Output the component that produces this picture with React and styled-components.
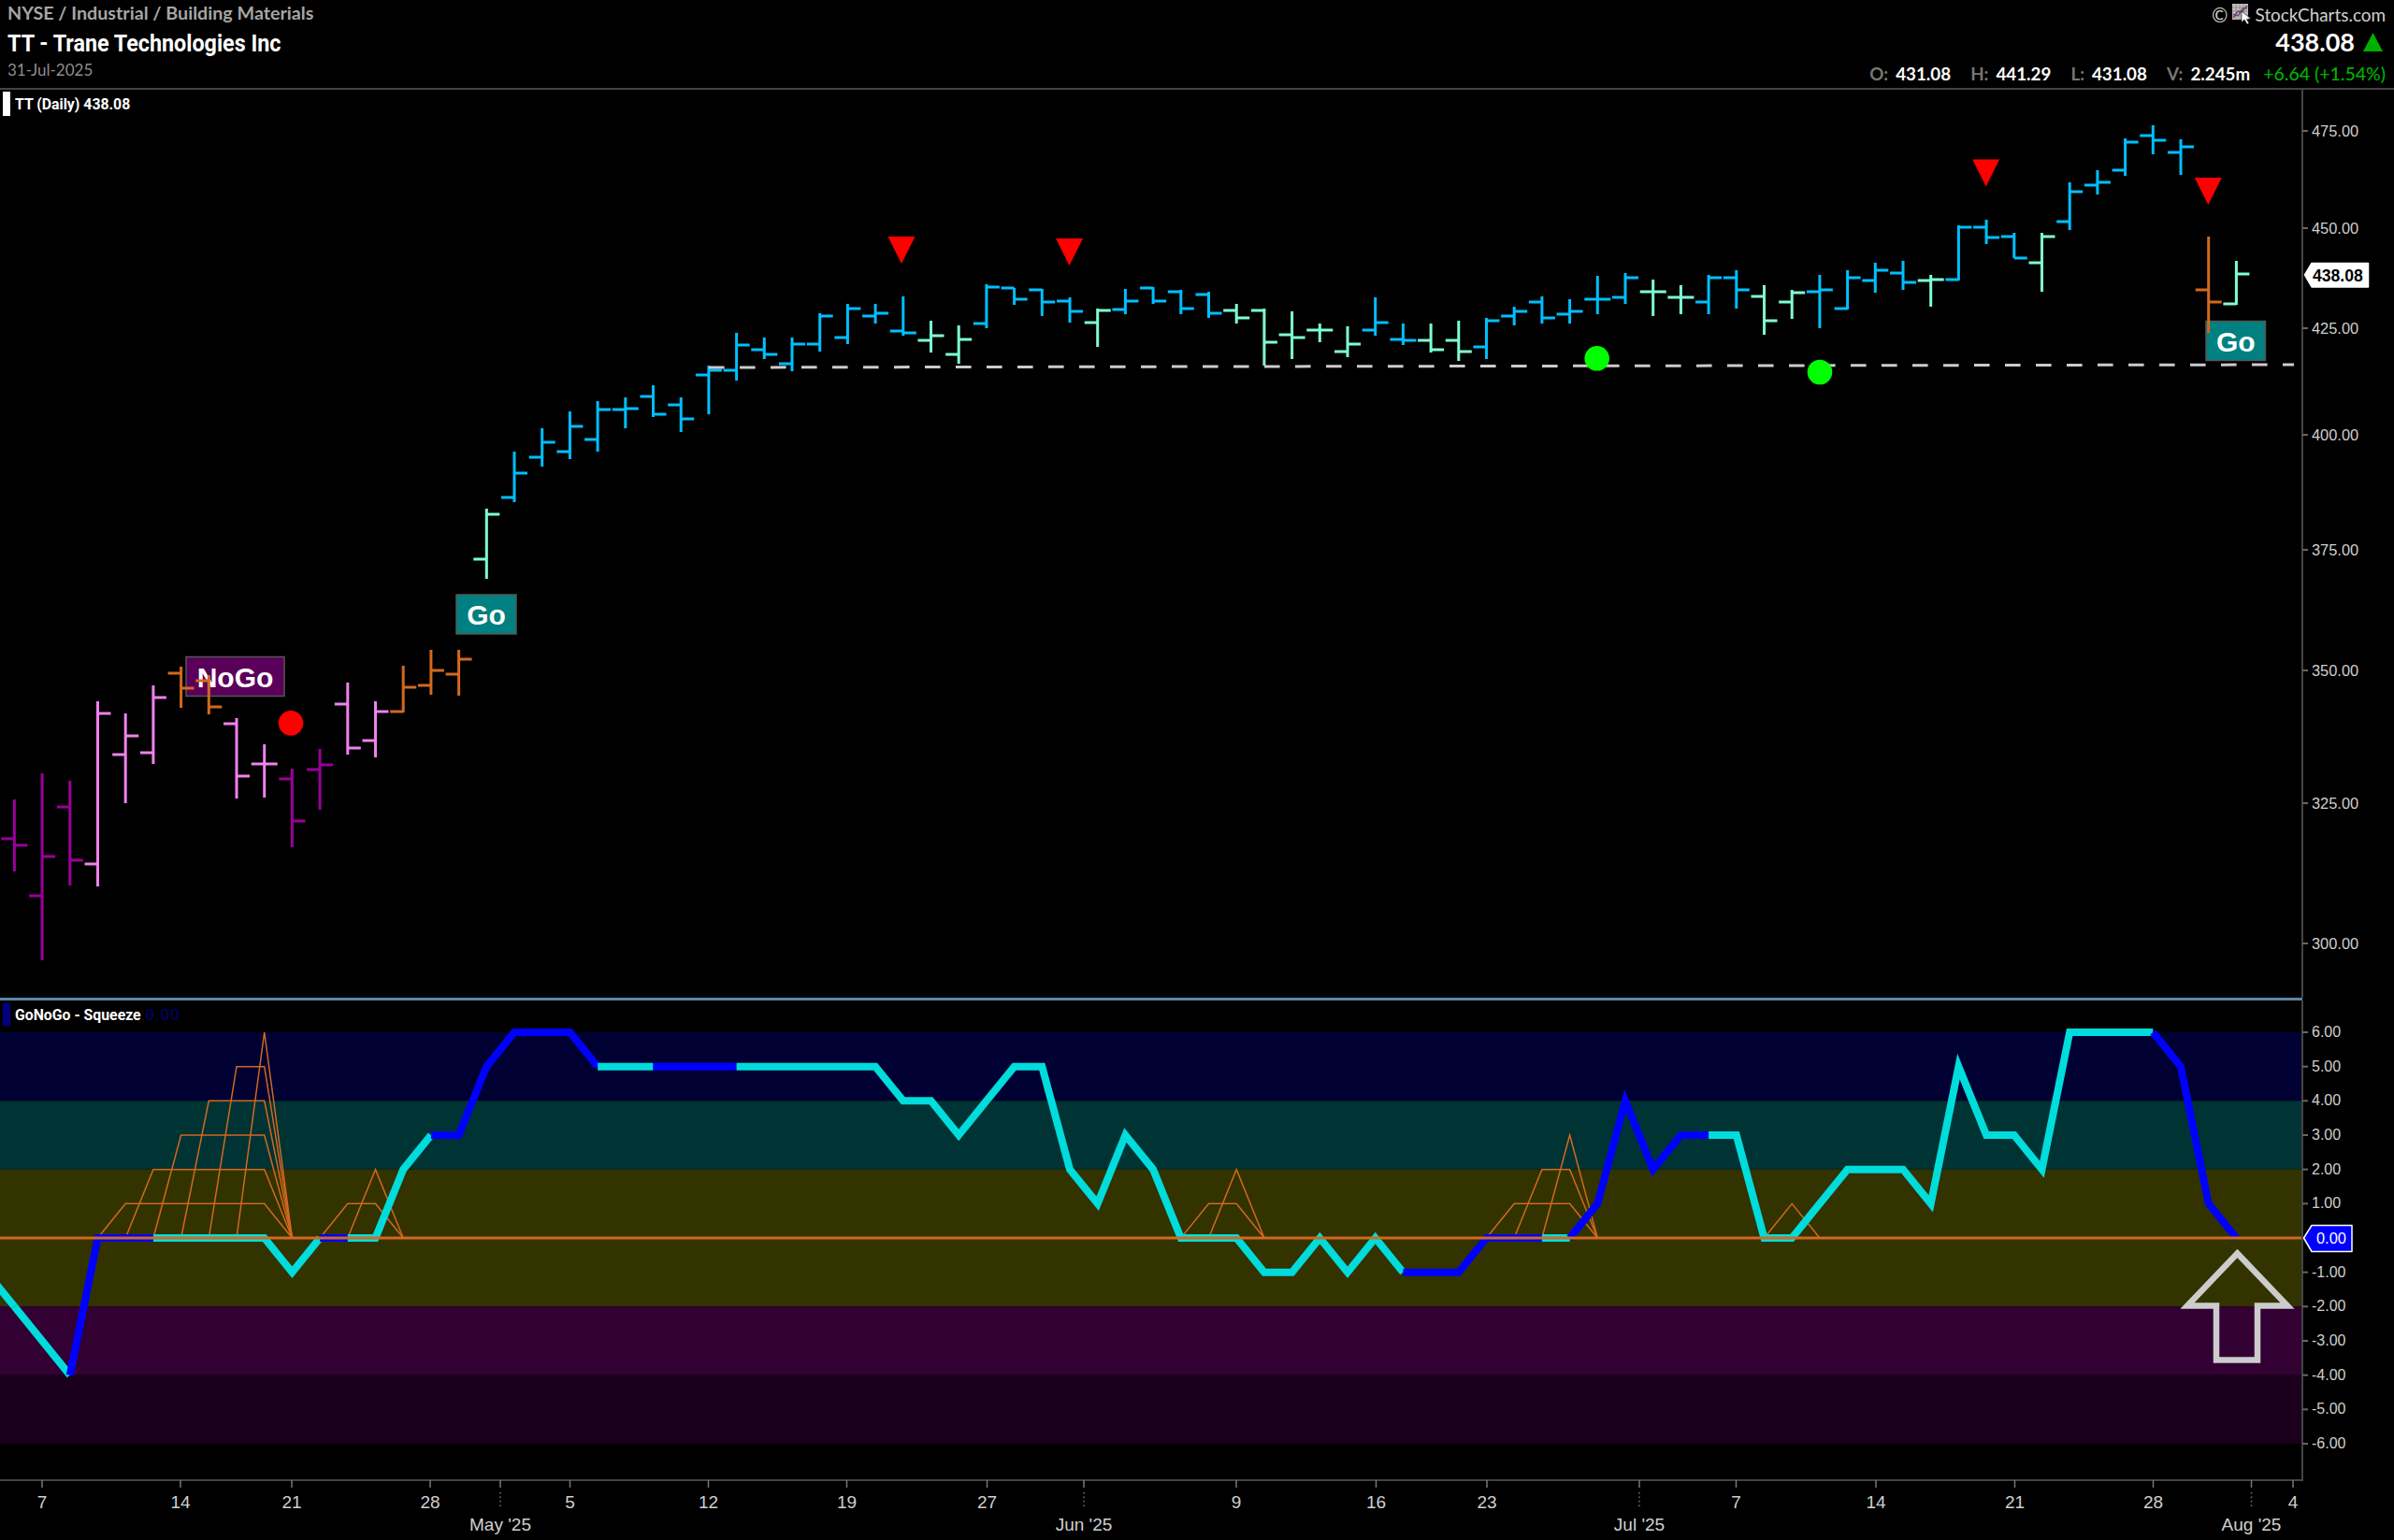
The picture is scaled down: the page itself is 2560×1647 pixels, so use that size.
import React from "react";
import styled, { createGlobalStyle } from "styled-components";

const barColors = {
  p: "#990099",
  v: "#ee82ee",
  o: "#d2691e",
  b: "#00bfff",
  a: "#7fffd4",
};

// high, low, open, close in page pixels, then the GoNoGo colour of the bar
const bars = [
  [855, 932, 897, 904, "p"],
  [827, 1027, 958, 916, "p"],
  [835, 947, 863, 920, "p"],
  [750, 948, 924, 763, "v"],
  [763, 859, 807, 787, "v"],
  [733, 817, 805, 746, "v"],
  [713, 757, 720, 736, "o"],
  [722, 764, 728, 756, "o"],
  [768, 854, 774, 830, "v"],
  [796, 853, 817, 817, "v"],
  [822, 906, 833, 878, "p"],
  [801, 866, 823, 818, "p"],
  [730, 807, 753, 800, "v"],
  [750, 810, 792, 761, "v"],
  [712, 762, 761, 735, "o"],
  [695, 743, 733, 717, "o"],
  [695, 744, 721, 705, "o"],
  [544, 619, 598, 550, "a"],
  [483, 537, 532, 506, "b"],
  [458, 499, 489, 473, "b"],
  [440, 491, 483, 456, "b"],
  [429, 483, 470, 438, "b"],
  [425, 458, 438, 437, "b"],
  [412, 446, 424, 443, "b"],
  [425, 462, 433, 448, "b"],
  [391, 443, 401, 396, "b"],
  [356, 407, 396, 369, "b"],
  [361, 384, 374, 379, "b"],
  [361, 397, 389, 368, "b"],
  [335, 376, 368, 338, "b"],
  [325, 368, 361, 330, "b"],
  [325, 346, 338, 335, "b"],
  [317, 359, 354, 356, "b"],
  [343, 377, 364, 359, "a"],
  [348, 389, 379, 363, "a"],
  [304, 351, 346, 307, "b"],
  [308, 326, 308, 320, "b"],
  [309, 338, 310, 323, "b"],
  [318, 345, 322, 333, "b"],
  [330, 371, 345, 332, "a"],
  [309, 336, 331, 322, "b"],
  [307, 325, 308, 322, "b"],
  [310, 336, 312, 330, "b"],
  [312, 340, 315, 335, "b"],
  [325, 346, 332, 340, "a"],
  [330, 391, 332, 366, "a"],
  [333, 384, 358, 361, "a"],
  [346, 366, 353, 353, "a"],
  [349, 382, 376, 368, "a"],
  [318, 359, 353, 345, "b"],
  [346, 369, 363, 364, "b"],
  [346, 377, 364, 374, "a"],
  [343, 386, 364, 376, "a"],
  [340, 384, 371, 343, "b"],
  [328, 348, 338, 333, "b"],
  [317, 346, 323, 340, "b"],
  [320, 346, 336, 333, "b"],
  [295, 336, 320, 320, "b"],
  [292, 325, 318, 297, "b"],
  [299, 338, 312, 312, "a"],
  [305, 336, 318, 318, "a"],
  [294, 336, 323, 297, "b"],
  [289, 330, 297, 310, "b"],
  [305, 358, 317, 343, "a"],
  [310, 341, 323, 313, "a"],
  [294, 351, 312, 310, "b"],
  [289, 331, 330, 297, "b"],
  [281, 313, 300, 289, "b"],
  [279, 310, 292, 302, "b"],
  [294, 328, 300, 299, "a"],
  [241, 300, 299, 243, "b"],
  [235, 261, 243, 254, "b"],
  [249, 276, 253, 276, "b"],
  [249, 312, 281, 253, "a"],
  [195, 246, 237, 205, "b"],
  [182, 208, 198, 195, "b"],
  [148, 188, 182, 152, "b"],
  [134, 165, 145, 150, "b"],
  [149, 187, 163, 157, "b"],
  [253, 356, 310, 323, "o"],
  [279, 326, 325, 293, "a"],
];

const squeezeValues = [
  -2, -3, -4, 0, 0, 0, 0, 0, 0, 0, -1, 0, 0, 0, 2, 3, 3, 5, 6, 6, 6, 5, 5, 5, 5,
  5, 5, 5, 5, 5, 5, 5, 4, 4, 3, 4, 5, 5, 2, 1, 3, 2, 0, 0, 0, -1, -1, 0, -1, 0,
  -1, -1, -1, 0, 0, 0, 0, 1, 4, 2, 3, 3, 3, 0, 0, 1, 2, 2, 2, 1, 5, 3, 3, 2, 6,
  6, 6, 6, 5, 1, 0,
];

// [from bar, to bar] stretches of the line that are drawn blue
const blueRuns = [
  [2, 5],
  [11, 12],
  [15, 21],
  [23, 26],
  [50, 55],
  [56, 61],
  [77, 80],
];

// squeeze wires: start bar, value they rise to, bar where they fall back to zero
const wires = [
  [3, 1, 10],
  [4, 2, 10],
  [5, 3, 10],
  [6, 4, 10],
  [7, 5, 10],
  [8, 6, 10],
  [11, 1, 14],
  [12, 2, 14],
  [42, 1, 45],
  [43, 2, 45],
  [53, 1, 57],
  [54, 2, 57],
  [55, 3, 57],
  [63, 1, 65],
];

const bands = [
  [6, 4, "#000033"],
  [4, 2, "#003333"],
  [2, -2, "#333300"],
  [-2, -4, "#330033"],
  [-4, -6, "#1a001a"],
];

const priceTicks = [
  ["475.00", 140],
  ["450.00", 244],
  ["425.00", 351],
  ["400.00", 465],
  ["375.00", 588],
  ["350.00", 717],
  ["325.00", 859],
  ["300.00", 1009],
];

const squeezeTicks = [6, 5, 4, 3, 2, 1, -1, -2, -3, -4, -5, -6];

const dayTicks = [
  ["7", 45],
  ["14", 193],
  ["21", 312],
  ["28", 460],
  ["5", 609.5],
  ["12", 757.5],
  ["19", 905.5],
  ["27", 1055.5],
  ["9", 1322],
  ["16", 1471.5],
  ["23", 1590],
  ["7", 1856.5],
  ["14", 2006],
  ["21", 2154.5],
  ["28", 2302.5],
  ["4", 2452],
];

const monthTicks = [
  ["May '25", 535],
  ["Jun '25", 1159],
  ["Jul '25", 1753],
  ["Aug '25", 2407.5],
];

const AXIS_X = 2462;
const barX = (i) => 15.4 + 29.7 * i;
const squeezeY = (v) => 1324 - 36.67 * v;

function squeezeRuns() {
  const points = squeezeValues.map((v, i) => [barX(i), squeezeY(v)]);
  const runs = [];
  let cursor = 0;
  const cyanTo = (to) => {
    if (to > cursor) runs.push({ color: "#00dcdc", points: points.slice(cursor, to + 1) });
  };
  // the line comes in from off the left edge
  runs.push({ color: "#00dcdc", points: [[-14.3, squeezeY(-1)], points[0]] });
  blueRuns.forEach(([from, to]) => {
    cyanTo(from);
    runs.push({ color: "#0000ff", points: points.slice(from, to + 1) });
    cursor = to;
  });
  return runs;
}

const GlobalStyle = createGlobalStyle`
  html, body {
    margin: 0;
    padding: 0;
    background: #000;
  }
`;

const Page = styled.div`
  width: 2560px;
  height: 1647px;
  background: #000;
  display: flex;
  flex-direction: column;
  overflow: hidden;
`;

const Header = styled.header`
  height: 96px;
  flex: none;
  box-sizing: border-box;
  display: flex;
  justify-content: space-between;
  padding: 0 9px 0 8px;
  border-bottom: 2px solid #444;
  font-family: Lato, sans-serif;
`;

const TitleBlock = styled.div`
  display: flex;
  flex-direction: column;
`;

const Sector = styled.div`
  font-size: 19.7px;
  font-weight: 700;
  line-height: 28px;
  color: #a6a6a6;
`;

const Title = styled.div`
  font-family: Roboto, sans-serif;
  font-size: 26.5px;
  font-weight: 700;
  line-height: 36px;
  color: #fff;
  white-space: nowrap;
  transform: scaleX(0.88);
  transform-origin: left center;
`;

const DateLine = styled.div`
  font-size: 17px;
  line-height: 22px;
  color: #8e8e8e;
`;

const QuoteBlock = styled.div`
  display: flex;
  flex-direction: column;
  align-items: flex-end;
`;

const Brand = styled.div`
  display: flex;
  align-items: center;
  gap: 4px;
  height: 30px;
  font-size: 18.9px;
  color: #d0d0d0;
`;

const CopyrightMark = styled.span`
  font-size: 21px;
`;

const LastPrice = styled.div`
  display: flex;
  align-items: center;
  gap: 9px;
  height: 28px;
  padding-right: 3px;
  font-size: 27px;
  font-weight: 700;
  color: #fff;
`;

const UpTriangle = styled.svg`
  width: 21px;
  height: 20px;
  margin-top: 2px;
`;

const Ohlc = styled.div`
  display: flex;
  align-items: center;
  height: 20px;
  margin-top: 10px;
  font-size: 18.8px;
  font-weight: 700;
  color: #fff;
  white-space: nowrap;
`;

const OhlcItem = styled.span`
  margin-right: ${(p) => p.$gap}px;
`;

const OhlcKey = styled.span`
  color: #777;
  margin-right: 8px;
`;

const Change = styled.span`
  color: #00b000;
  font-size: 19.5px;
  font-weight: 500;
`;

const Pane = styled.section`
  position: relative;
  flex: none;
  height: ${(p) => p.$height}px;
`;

const PaneChart = styled.svg`
  display: block;
`;

const Legend = styled.div`
  position: absolute;
  left: 3px;
  top: ${(p) => p.$top}px;
  display: flex;
  align-items: center;
  gap: 5px;
  font-family: Roboto, sans-serif;
  font-size: 17.2px;
  font-weight: 700;
  color: #fff;
  white-space: nowrap;
`;

const LegendSwatch = styled.span`
  width: 8px;
  height: ${(p) => p.$height}px;
  background: ${(p) => p.$color};
`;

const LegendText = styled.span`
  display: inline-block;
  transform: scaleX(0.92);
  transform-origin: left center;
`;

const LegendValue = styled.span`
  margin-left: -12px;
  font-weight: 400;
  color: #00007a;
  letter-spacing: 1px;
`;

const Divider = styled.div`
  flex: none;
  width: ${AXIS_X}px;
  height: 3px;
  background: #5b86a8;
`;

const AxisLabel = styled.text`
  font-family: "Liberation Sans", Arial, sans-serif;
  font-size: ${(p) => p.$size}px;
  fill: #cfcfcf;
`;

const ChartLabelText = styled.text`
  font-family: "Liberation Sans", Arial, sans-serif;
  font-size: 30px;
  font-weight: 700;
  fill: #fff;
  text-anchor: middle;
`;

const TagText = styled.text`
  font-family: "Liberation Sans", Arial, sans-serif;
  font-size: ${(p) => p.$size}px;
  font-weight: ${(p) => p.$weight};
  fill: ${(p) => p.$color};
`;

function StockChartsMark() {
  return (
    <svg width="21" height="22" viewBox="0 0 21 22">
      <rect x="0" y="0" width="17" height="17" fill="#bdbdbd" />
      <path d="M4 0v17M8 0v17M12 0v17M0 4h17M0 8h17M0 12h17" stroke="#8b8b8b" strokeWidth="0.8" />
      <path d="M1 15L6 8L10 9L16 2" fill="none" stroke="#b02a3a" strokeWidth="1.5" />
      <path d="M1 11L6 13L11 5L16 5" fill="none" stroke="#34508a" strokeWidth="1.1" />
      <path d="M10 8L10 20L13 17L16 22L18 21L15.5 16.5L20 16Z" fill="#fff" stroke="#000" strokeWidth="0.6" />
    </svg>
  );
}

function Bar({ high, low, open, close, color, x }) {
  return (
    <path
      d={`M${x} ${high}V${low}M${x - 14} ${open}H${x}M${x} ${close}H${x + 14}`}
      stroke={barColors[color]}
      strokeWidth="3"
      fill="none"
    />
  );
}

function ChartLabel({ x, y, width, fill, children }) {
  return (
    <g>
      <rect x={x} y={y} width={width} height="42" fill={fill} stroke="#555" strokeWidth="1.5" />
      <ChartLabelText x={x + width / 2} y={y + 32}>
        {children}
      </ChartLabelText>
    </g>
  );
}

function SellMark({ x, y }) {
  return <polygon points={`${x - 14.5},${y} ${x + 14.5},${y} ${x},${y + 29}`} fill="#ff0000" />;
}

function PriceChart() {
  return (
    <PaneChart width="2560" height="971" viewBox="0 96 2560 971">
      <line x1={AXIS_X} y1="96" x2={AXIS_X} y2="1067" stroke="#444" strokeWidth="2" />
      {priceTicks.map(([label, y]) => (
        <g key={label}>
          <line x1={AXIS_X} y1={y} x2={AXIS_X + 6} y2={y} stroke="#666" strokeWidth="2" />
          <AxisLabel $size={16.4} x="2472" y={y + 6}>
            {label}
          </AxisLabel>
        </g>
      ))}
      <ChartLabel x={199} y={702.5} width={105} fill="#5a005a">
        NoGo
      </ChartLabel>
      <ChartLabel x={488} y={636} width={64} fill="#008080">
        Go
      </ChartLabel>
      <ChartLabel x={2359} y={343.5} width={63.5} fill="#008080">
        Go
      </ChartLabel>
      {bars.map(([high, low, open, close, color], i) => (
        <Bar key={i} x={barX(i)} high={high} low={low} open={open} close={close} color={color} />
      ))}
      <line
        x1="758"
        y1="393"
        x2="2453"
        y2="390"
        stroke="#cccccc"
        strokeWidth="3"
        strokeDasharray="16.6 16.4"
      />
      <SellMark x={964} y={253} />
      <SellMark x={1143.5} y={255} />
      <SellMark x={2123.7} y={170.5} />
      <SellMark x={2361.3} y={190} />
      <circle cx="311" cy="773.3" r="13.3" fill="#ff0000" />
      <circle cx="1707.7" cy="383.3" r="13.3" fill="#00ff00" />
      <circle cx="1946" cy="398" r="13.3" fill="#00ff00" />
      <path d="M2464.5 294L2472 281.5H2532.5V307H2472Z" fill="#fff" stroke="#fff" strokeLinejoin="round" strokeWidth="1.5" />
      <TagText $size={17.6} $weight={700} $color="#000" x="2473" y="300.5">
        438.08
      </TagText>
    </PaneChart>
  );
}

function SqueezeChart() {
  return (
    <PaneChart width="2560" height="512" viewBox="0 1070 2560 512">
      {bands.map(([from, to, fill]) => (
        <rect
          key={from}
          x="0"
          y={squeezeY(from)}
          width={AXIS_X}
          height={squeezeY(to) - squeezeY(from)}
          fill={fill}
        />
      ))}
      {wires.map(([start, value, end]) => (
        <polyline
          key={start}
          points={[
            [barX(start), squeezeY(0)],
            [barX(start + 1), squeezeY(value)],
            [barX(end - 1), squeezeY(value)],
            [barX(end), squeezeY(0)],
          ].join(" ")}
          fill="none"
          stroke="#d2691e"
          strokeWidth="1.5"
        />
      ))}
      {squeezeRuns().map((run, i) => (
        <polyline
          key={i}
          points={run.points.join(" ")}
          fill="none"
          stroke={run.color}
          strokeWidth="8"
          strokeLinejoin="miter"
        />
      ))}
      <line x1="0" y1={squeezeY(0)} x2={AXIS_X} y2={squeezeY(0)} stroke="#d2691e" strokeWidth="3" />
      <line x1={AXIS_X} y1="1070" x2={AXIS_X} y2="1582" stroke="#444" strokeWidth="2" />
      {squeezeTicks.map((v) => (
        <g key={v}>
          <line x1={AXIS_X} y1={squeezeY(v)} x2={AXIS_X + 6} y2={squeezeY(v)} stroke="#666" strokeWidth="2" />
          <AxisLabel $size={16} x="2472" y={squeezeY(v) + 5}>
            {v.toFixed(2)}
          </AxisLabel>
        </g>
      ))}
      <path
        d="M2392.5 1340.5L2446 1396.5H2414V1454.5H2370V1396.5H2339Z"
        fill="none"
        stroke="#cccccc"
        strokeWidth="6.5"
      />
      <path d="M2463.5 1324L2472 1310.5H2515V1338.5H2472Z" fill="#0000ff" stroke="#fff" strokeLinejoin="round" strokeWidth="1.5" />
      <TagText $size={16.4} $weight={400} $color="#fff" x="2477" y="1330">
        0.00
      </TagText>
    </PaneChart>
  );
}

function TimeAxis() {
  return (
    <PaneChart width="2560" height="65" viewBox="0 1582 2560 65">
      <line x1="0" y1="1583" x2={AXIS_X + 1} y2="1583" stroke="#444" strokeWidth="2" />
      {dayTicks.map(([label, x]) => (
        <g key={x}>
          <line x1={x} y1="1583" x2={x} y2="1591" stroke="#777" strokeWidth="1.5" />
          <AxisLabel $size={19} x={x} y="1613" textAnchor="middle">
            {label}
          </AxisLabel>
        </g>
      ))}
      {monthTicks.map(([label, x]) => (
        <g key={x}>
          <line x1={x} y1="1583" x2={x} y2="1591" stroke="#777" strokeWidth="1.5" />
          <line x1={x} y1="1596" x2={x} y2="1613" stroke="#777" strokeWidth="1.5" strokeDasharray="1.5 3" />
          <AxisLabel $size={19} x={x} y="1637" textAnchor="middle">
            {label}
          </AxisLabel>
        </g>
      ))}
    </PaneChart>
  );
}

export default function App() {
  return (
    <Page>
      <GlobalStyle />
      <Header>
        <TitleBlock>
          <Sector>NYSE / Industrial / Building Materials</Sector>
          <Title>TT - Trane Technologies Inc</Title>
          <DateLine>31-Jul-2025</DateLine>
        </TitleBlock>
        <QuoteBlock>
          <Brand>
            <CopyrightMark>©</CopyrightMark>
            <StockChartsMark />
            <span>StockCharts.com</span>
          </Brand>
          <LastPrice>
            438.08
            <UpTriangle viewBox="0 0 21 20">
              <polygon points="10.5,0 21,20 0,20" fill="#00b000" />
            </UpTriangle>
          </LastPrice>
          <Ohlc>
            <OhlcItem $gap={21}>
              <OhlcKey>O:</OhlcKey>431.08
            </OhlcItem>
            <OhlcItem $gap={21}>
              <OhlcKey>H:</OhlcKey>441.29
            </OhlcItem>
            <OhlcItem $gap={21}>
              <OhlcKey>L:</OhlcKey>431.08
            </OhlcItem>
            <OhlcItem $gap={14}>
              <OhlcKey>V:</OhlcKey>2.245m
            </OhlcItem>
            <Change>+6.64 (+1.54%)</Change>
          </Ohlc>
        </QuoteBlock>
      </Header>
      <Pane $height={971}>
        <PriceChart />
        <Legend $top={2}>
          <LegendSwatch $color="#fff" $height={26} />
          <LegendText>TT (Daily) 438.08</LegendText>
        </Legend>
      </Pane>
      <Divider />
      <Pane $height={512}>
        <SqueezeChart />
        <Legend $top={3}>
          <LegendSwatch $color="#000080" $height={24} />
          <LegendText>GoNoGo - Squeeze</LegendText>
          <LegendValue>0.00</LegendValue>
        </Legend>
      </Pane>
      <Pane $height={65}>
        <TimeAxis />
      </Pane>
    </Page>
  );
}
